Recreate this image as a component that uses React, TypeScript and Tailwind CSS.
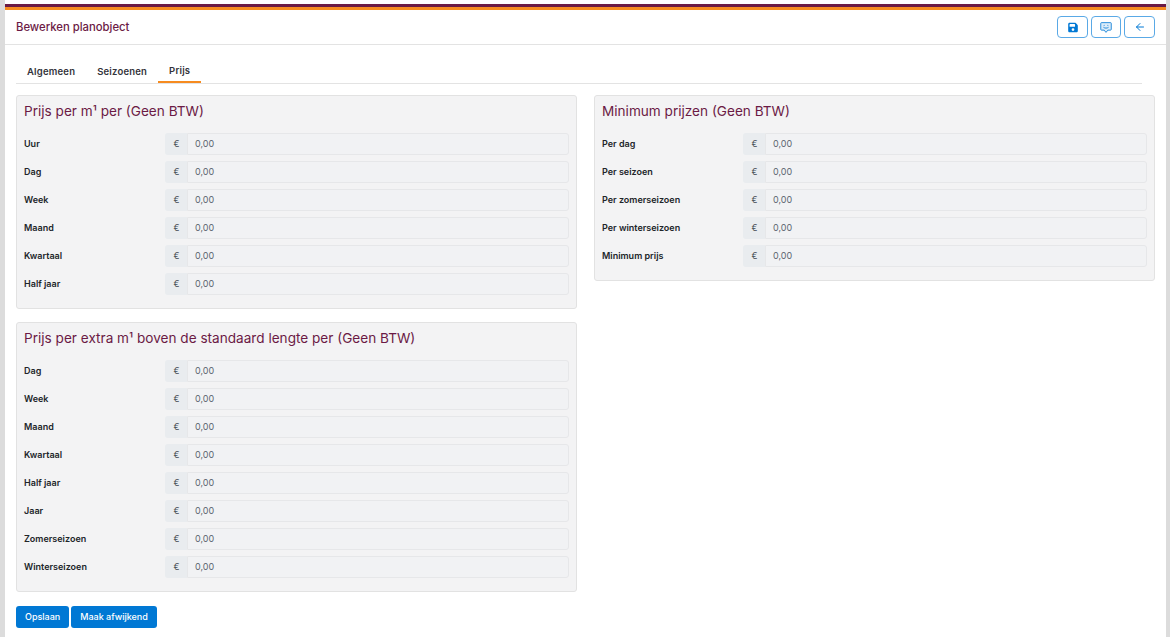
import { ArrowLeft } from "lucide-react";

const SaveIcon = () => (
  <svg width="10" height="11" viewBox="0 0 448 512" fill="currentColor">
    <path d="M64 32C28.7 32 0 60.7 0 96V416c0 35.3 28.7 64 64 64H384c35.3 0 64-28.7 64-64V173.3c0-17-6.7-33.3-18.7-45.3L352 50.7C340 38.7 323.700 32 306.700 32H64zm0 96c0-17.700 14.300-32 32-32H288c17.700 0 32 14.300 32 32v64c0 17.700-14.300 32-32 32H96c-17.700 0-32-14.300-32-32V128zM224 288a64 64 0 1 1 0 128 64 64 0 1 1 0-128z" />
  </svg>
);

const CommentIcon = () => (
  <svg width="12" height="13" viewBox="0 0 16 16" fill="#dcecf9" stroke="currentColor" strokeWidth="1.1">
    <path d="M2 1.500h12a1 1 0 0 1 1 1v8a1 1 0 0 1-1 1h-3.500L8 14.500l-2.500-3H2a1 1 0 0 1-1-1v-8a1 1 0 0 1 1-1z" />
    <circle cx="5.500" cy="5" r=".7" fill="currentColor" stroke="none" />
    <circle cx="10.500" cy="5" r=".7" fill="currentColor" stroke="none" />
    <path d="M5 8c1.500 1.200 4.500 1.200 6 0" fill="none" strokeLinecap="round" />
  </svg>
);

const PriceRow = ({ label }: { label: string }) => (
  <div className="flex h-[22px] items-center">
    <label className="w-[141px] shrink-0 text-[9px] font-semibold text-[#212529]">{label}</label>
    <div className="flex h-[22px] flex-1">
      <span className="flex w-[22px] items-center justify-center rounded-l-[3px] border border-r-0 border-[#e9ecef] bg-[#e9ecef] text-[9px] text-[#495057]">
        €
      </span>
      <div className="flex flex-1 items-center rounded-r-[3px] border border-[#e6e7e9] bg-[#f1f2f4] pl-[7px] text-[9px] text-[#5c6670]">
        0,00
      </div>
    </div>
  </div>
);

const Panel = ({ title, rows }: { title: string; rows: string[] }) => (
  <section className="rounded-[3px] border border-[#e2e2e2] bg-[#f3f3f4] px-[7px] pt-[6px] pb-[12.5px]">
    <h2 className="mb-[12px] text-[13.6px] leading-[19px] text-[#6b1a45]">{title}</h2>
    <div className="flex flex-col gap-[6px]">
      {rows.map((row) => (
        <PriceRow key={row} label={row} />
      ))}
    </div>
  </section>
);

export default function App() {
  return (
    <div className="flex h-[637px] w-[1170px] overflow-hidden bg-white font-['Inter',sans-serif]">
      <div className="w-[5px] shrink-0 bg-[#dcdcdc]" />
      <main className="flex min-w-0 flex-1 flex-col">
        <div className="mt-[4px] h-[6px] shrink-0 border-b-[3px] border-[#f68b1f] bg-[#6b1a45]" />
        <header className="flex h-[35px] shrink-0 items-center justify-between border-b border-[#e3e3e3] pr-[11px] pl-[11px]">
          <h1 className="text-[11.3px] font-medium text-[#6b1a45]">Bewerken planobject</h1>
          <div className="flex gap-[3px] text-[#0078d4]">
            <button className="flex h-[22px] w-[31px] items-center justify-center rounded-[4px] border border-[#5aa9e6]">
              <SaveIcon />
            </button>
            <button className="flex h-[22px] w-[30px] items-center justify-center rounded-[4px] border border-[#5aa9e6]">
              <CommentIcon />
            </button>
            <button className="flex h-[22px] w-[31px] items-center justify-center rounded-[4px] border border-[#5aa9e6]">
              <ArrowLeft size={12} />
            </button>
          </div>
        </header>
        <div className="flex-1 px-[11px]">
          <nav className="mt-[14px] mr-[13px] flex h-[25px] border-b border-[#e3e3e3] text-[9.5px] font-semibold tracking-[0.2px] text-[#33333a]">
            <a className="flex h-[24px] items-center px-[11px] pt-[2px]">Algemeen</a>
            <a className="flex h-[24px] items-center px-[11px] pt-[2px]">Seizoenen</a>
            <a className="flex h-[24px] items-center border-b-2 border-[#f68b1f] px-[11px] pt-[2px]">Prijs</a>
          </nav>
          <div className="mt-[11px] grid grid-cols-[561px_561px] gap-x-[17px]">
            <div className="flex flex-col gap-[13.5px]">
              <Panel title="Prijs per m¹ per (Geen BTW)" rows={["Uur", "Dag", "Week", "Maand", "Kwartaal", "Half jaar"]} />
              <Panel
                title="Prijs per extra m¹ boven de standaard lengte per (Geen BTW)"
                rows={["Dag", "Week", "Maand", "Kwartaal", "Half jaar", "Jaar", "Zomerseizoen", "Winterseizoen"]}
              />
            </div>
            <div>
              <Panel title="Minimum prijzen (Geen BTW)" rows={["Per dag", "Per seizoen", "Per zomerseizoen", "Per winterseizoen", "Minimum prijs"]} />
            </div>
          </div>
          <div className="mt-[14px] flex gap-[2px]">
            <button className="h-[22px] rounded-[3px] bg-[#0078d4] px-[9px] text-[9px] font-medium text-white">Opslaan</button>
            <button className="h-[22px] rounded-[3px] bg-[#0078d4] px-[9px] text-[9px] font-medium text-white">Maak afwijkend</button>
          </div>
        </div>
      </main>
      <div className="w-[4px] shrink-0 bg-[#dcdcdc]" />
    </div>
  );
}
